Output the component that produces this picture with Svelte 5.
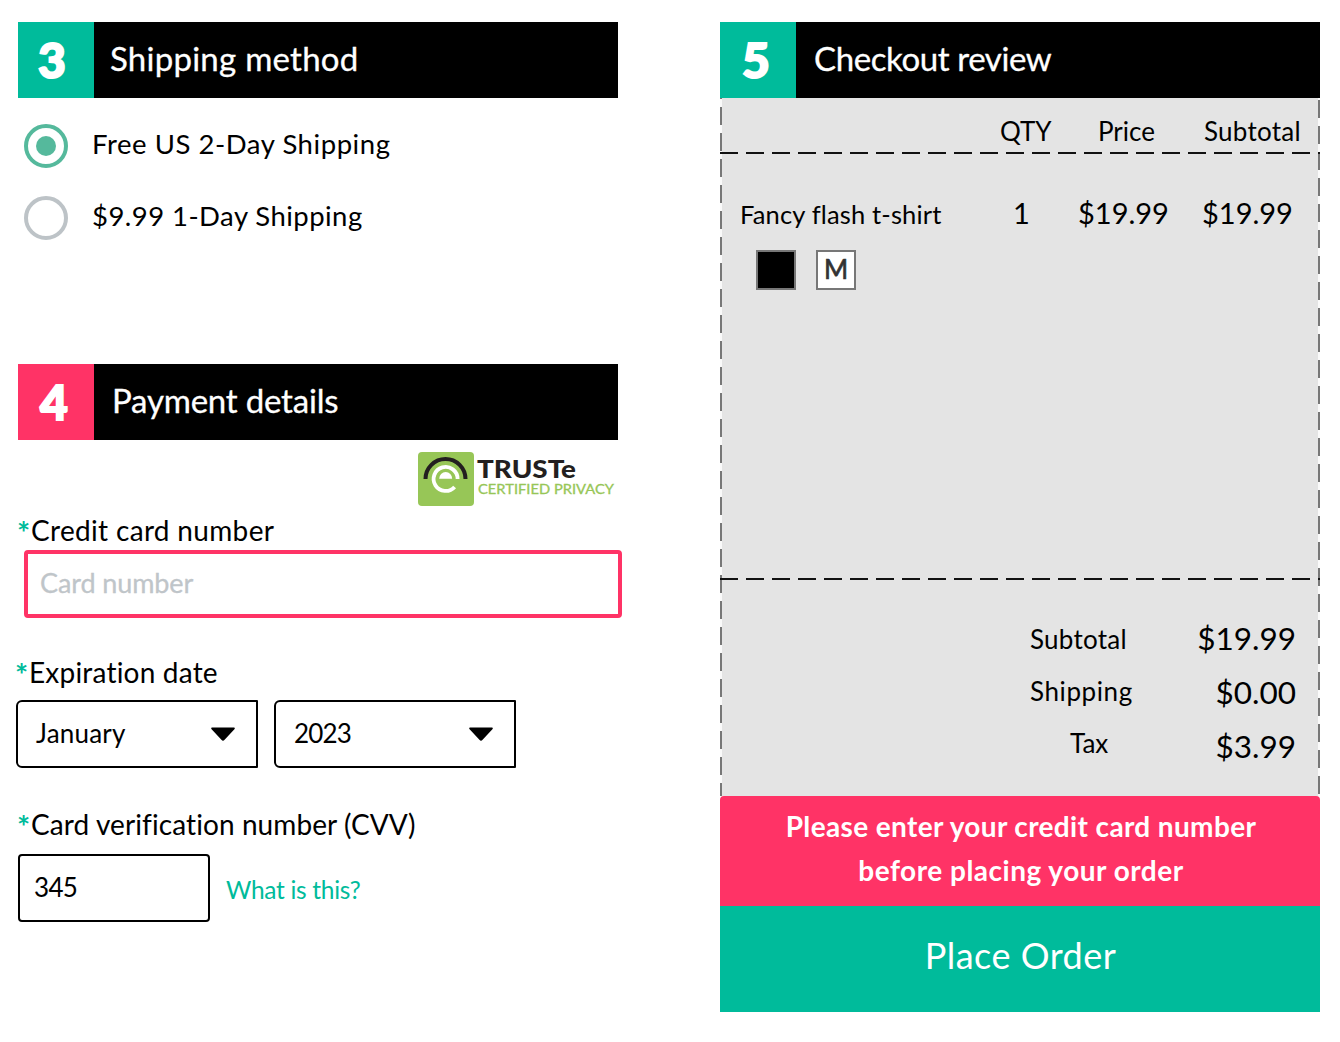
<script>
  const shipping = [
    { label: 'Free US 2-Day Shipping', cls: 'free', selected: true },
    { label: '$9.99 1-Day Shipping', cls: 'fast', selected: false }
  ];
  const selects = [
    { value: 'January', cls: 'month' },
    { value: '2023', cls: 'year' }
  ];
  const totals = [
    { label: 'Subtotal', value: '$19.99', cls: 'row-sub' },
    { label: 'Shipping', value: '$0.00', cls: 'row-ship' },
    { label: 'Tax', value: '$3.99', cls: 'row-tax' }
  ];
</script>

<main>
  <div class="left">
    <header class="bar">
      <span class="num">3</span>
      <h2 class="t-ship">Shipping method</h2>
    </header>
    <div class="options">
      {#each shipping as o}
        <div class="option">
          <svg width="44" height="44" viewBox="0 0 44 44">
            {#if o.selected}
              <circle cx="22" cy="22" r="20" fill="#fff" stroke="#55b99c" stroke-width="4" />
              <circle cx="22" cy="22" r="10" fill="#55b99c" />
            {:else}
              <circle cx="22" cy="22" r="20" fill="#fff" stroke="#bdc3c7" stroke-width="4" />
            {/if}
          </svg>
          <span class={o.cls}>{o.label}</span>
        </div>
      {/each}
    </div>

    <header class="bar">
      <span class="num pink">4</span>
      <h2 class="t-pay">Payment details</h2>
    </header>
    <svg class="truste" width="200" height="54" viewBox="0 0 200 54">
      <rect width="56" height="54" rx="4" fill="#97c657" />
      <path d="M7.5 27a20 20 0 0 1 40 0" fill="none" stroke="#231f20" stroke-width="4" />
      <path d="M39.6 27A12 12 0 1 0 36.6 34.9" fill="none" stroke="#fff" stroke-width="3.8" />
      <path d="M21.2 26.8a6.5 6.8 0 0 1 13 0Z" fill="#fff" />
      <text x="59" y="26.3" class="brand" textLength="99" lengthAdjust="spacingAndGlyphs">TRUSTe</text>
      <text x="60" y="42" class="sub" textLength="136" lengthAdjust="spacingAndGlyphs">CERTIFIED PRIVACY</text>
    </svg>

    <div class="label l-card"><i>*</i><span>Credit card number</span></div>
    <div class="cardinput"><span>Card number</span></div>

    <div class="label l-exp"><i>*</i><span>Expiration date</span></div>
    <div class="selects">
      {#each selects as s}
        <div class="select">
          <span class={s.cls}>{s.value}</span>
          <svg width="24" height="15" viewBox="0 0 24 15"><path d="M1 .5H23Q24.4 1 23.4 2.2L13.6 12.8Q12 14.6 10.4 12.8L.6 2.2Q-.4 1 1 .5Z" /></svg>
        </div>
      {/each}
    </div>

    <div class="label l-cvv"><i>*</i><span>Card verification number (CVV)</span></div>
    <div class="cvvrow">
      <div class="cvv"><span>345</span></div>
      <span class="what">What is this?</span>
    </div>
  </div>

  <div class="right">
    <header class="bar">
      <span class="num five">5</span>
      <h2 class="t-review">Checkout review</h2>
    </header>
    <div class="review">
      <div class="heads">
        <span class="h-qty">QTY</span>
        <span class="h-price">Price</span>
        <span class="h-sub">Subtotal</span>
      </div>
      <div class="dash"></div>
      <div class="item">
        <span class="name">Fancy flash t-shirt</span>
        <span class="qty">1</span>
        <span class="price">$19.99</span>
        <span class="price">$19.99</span>
      </div>
      <div class="swatches">
        <div class="swatch black"></div>
        <div class="swatch">M</div>
      </div>
      <div class="dash"></div>
      <div class="totals">
        <div class="names">
          {#each totals as t}<span class={t.cls}>{t.label}</span>{/each}
        </div>
        <div class="values">
          {#each totals as t}<span>{t.value}</span>{/each}
        </div>
      </div>
    </div>
    <div class="alert">
      <span class="a1">Please enter your credit card number</span>
      <span class="a2">before placing your order</span>
    </div>
    <div class="place"><span>Place Order</span></div>
  </div>
</main>

<style>
  :global(body) { background: #fff; }
  main {
    display: flex;
    width: 1340px;
    height: 1042px;
    box-sizing: border-box;
    padding-top: 22px;
    font-family: Lato, 'Liberation Sans', sans-serif;
    color: #000;
    white-space: nowrap;
    overflow: hidden;
  }
  .left { width: 704px; padding-left: 16px; }
  .right { width: 600px; }
  .bar { display: flex; height: 76px; background: #000; color: #fff; }
  .left .bar { width: 600px; margin-left: 2px; }
  .num {
    width: 76px;
    background: #00bb9b;
    font-size: 48px;
    font-weight: 900;
    line-height: 76px;
    text-align: center;
    text-indent: -8px;
    -webkit-text-stroke: 2px #fff;
  }
  .num.pink { background: #ff3366; text-indent: -4px; }
  .num.five { text-indent: -4px; }
  h2 { margin: 0; font-size: 33px; font-weight: 400; line-height: 72px; -webkit-text-stroke: 0.3px #fff; }
  .t-ship { padding-left: 16px; letter-spacing: 0.25px; }
  .t-pay { padding-left: 18px; letter-spacing: -0.2px; }
  .t-review { padding-left: 18px; letter-spacing: -0.4px; }

  .options { height: 240px; padding: 26px 0 0 8px; }
  .option { display: flex; align-items: center; gap: 24px; height: 44px; margin-bottom: 28px; font-size: 27.5px; }
  .option span { line-height: 38px; margin-bottom: 4px; }
  .free { letter-spacing: 0.55px; }
  .fast { letter-spacing: 0.45px; }

  .truste { display: block; margin: 12px 0 0 402px; }
  .brand { font-size: 25px; font-weight: 900; fill: #231f20; }
  .sub { font-size: 13.2px; fill: #97c657; stroke: #97c657; stroke-width: 0.3px; }

  .label { display: flex; line-height: 36px; height: 34px; font-size: 28px; }
  .label i { width: 13px; color: #00bb9b; font-size: 31px; line-height: 40px; font-style: normal; font-weight: 700; text-indent: -1px; }
  .l-card { margin: 6px 0 4px 2px; letter-spacing: 0.33px; }
  .cardinput {
    width: 598px;
    height: 68px;
    box-sizing: border-box;
    margin-left: 8px;
    padding-left: 12px;
    border: 4px solid #ff3366;
    border-radius: 4px;
    color: #bfc5c9;
    font-size: 27px;
    line-height: 57px;
    letter-spacing: -0.1px;
    -webkit-text-stroke: 0.3px #bfc5c9;
  }
  .l-exp { margin: 36px 0 12px; letter-spacing: 0.2px; }
  .selects { display: flex; gap: 16px; }
  .select {
    display: flex;
    justify-content: space-between;
    width: 242px;
    height: 68px;
    box-sizing: border-box;
    padding: 0 21px 0 18px;
    border: 2px solid #000;
    border-radius: 6px 1px 1px 6px;
    font-size: 26px;
    line-height: 62px;
  }
  .month { letter-spacing: 0.2px; }
  .year { letter-spacing: -0.8px; }
  .select svg { margin-top: 25px; }
  .l-cvv { margin: 38px 0 14px 2px; letter-spacing: 0.09px; }
  .cvvrow { display: flex; gap: 16px; margin-left: 2px; }
  .cvv {
    width: 192px;
    height: 68px;
    box-sizing: border-box;
    padding-left: 14px;
    border: 2px solid #000;
    border-radius: 4px;
    font-size: 26px;
    line-height: 62px;
    letter-spacing: -0.7px;
  }
  .what { color: #00bb9b; font-size: 24.5px; line-height: 71px; letter-spacing: -0.3px; }

  .review {
    height: 698px;
    background:
      repeating-linear-gradient(#777 0 18px, #fafafa 18px 26px) 0 -17px / 2px 720px no-repeat,
      repeating-linear-gradient(#777 0 18px, #fafafa 18px 26px) 598px -24px / 2px 730px no-repeat,
      #e4e4e4;
  }
  .heads { display: flex; height: 54px; font-size: 26px; line-height: 66px; }
  .h-qty { width: 98px; padding-left: 280px; }
  .h-price { width: 106px; }
  .h-sub { letter-spacing: 0.25px; }
  .dash { height: 2px; background: repeating-linear-gradient(90deg, #111 0 18px, transparent 18px 26px); }
  .item { display: flex; height: 96px; font-size: 29px; line-height: 117px; }
  .item span { flex-shrink: 0; }
  .item .name { width: 273px; padding-left: 20px; font-size: 25.5px; line-height: 121px; letter-spacing: 0.15px; }
  .item .qty { width: 65px; }
  .item .price { width: 124px; }
  .item .price:last-child { width: auto; }
  .swatches { display: flex; gap: 20px; height: 328px; padding-left: 36px; }
  .swatch {
    width: 40px;
    height: 40px;
    box-sizing: border-box;
    border: 2px solid #777;
    background: #fff;
    color: #333;
    font-size: 26px;
    line-height: 35px;
    text-align: center;
    -webkit-text-stroke: 0.7px #333;
  }
  .swatch.black { background: #000; }
  .totals { display: flex; justify-content: space-between; padding: 32px 24px 0 310px; }
  .names, .values { display: flex; flex-direction: column; }
  .names { font-size: 26px; line-height: 52px; padding-top: 1px; letter-spacing: 0.25px; }
  .names .row-ship { letter-spacing: 0.6px; }
  .names .row-tax { padding-left: 40px; letter-spacing: 0; }
  .values { font-size: 31.5px; line-height: 54px; align-items: flex-end; margin-top: -1px; }
  .alert {
    display: flex;
    flex-direction: column;
    align-items: center;
    height: 110px;
    box-sizing: border-box;
    padding: 8px 0 0 2px;
    border-radius: 4px 4px 0 0;
    background: #ff3366;
    color: #fff;
    font-size: 28px;
    font-weight: 700;
    line-height: 44px;
  }
  .a1 { letter-spacing: 0.36px; }
  .a2 { letter-spacing: 0.5px; }
  .place { height: 106px; background: #00bb9b; color: #fff; font-size: 36px; line-height: 98px; text-align: center; text-indent: 1px; letter-spacing: 0.5px; }
</style>
